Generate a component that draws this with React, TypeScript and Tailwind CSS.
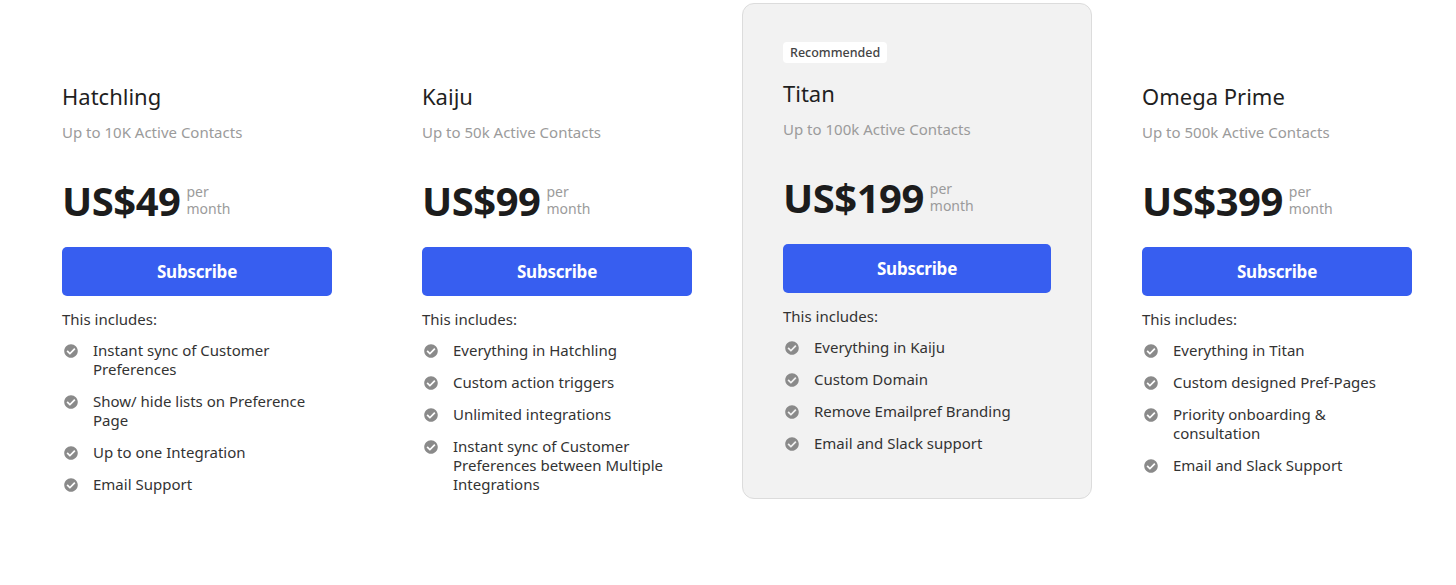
import { FaCheckCircle } from 'react-icons/fa'

type Plan = {
  name: string
  contacts: string
  price: string
  features: string[]
  recommended?: boolean
}

const plans: Plan[] = [
  {
    name: 'Hatchling',
    contacts: 'Up to 10K Active Contacts',
    price: 'US$49',
    features: [
      'Instant sync of Customer Preferences',
      'Show/ hide lists on Preference Page',
      'Up to one Integration',
      'Email Support',
    ],
  },
  {
    name: 'Kaiju',
    contacts: 'Up to 50k Active Contacts',
    price: 'US$99',
    features: [
      'Everything in Hatchling',
      'Custom action triggers',
      'Unlimited integrations',
      'Instant sync of Customer Preferences between Multiple Integrations',
    ],
  },
  {
    name: 'Titan',
    contacts: 'Up to 100k Active Contacts',
    price: 'US$199',
    recommended: true,
    features: ['Everything in Kaiju', 'Custom Domain', 'Remove Emailpref Branding', 'Email and Slack support'],
  },
  {
    name: 'Omega Prime',
    contacts: 'Up to 500k Active Contacts',
    price: 'US$399',
    features: [
      'Everything in Titan',
      'Custom designed Pref-Pages',
      'Priority onboarding & consultation',
      'Email and Slack Support',
    ],
  },
]

function PlanCard({ plan }: { plan: Plan }) {
  return (
    <div
      className={
        plan.recommended
          ? 'rounded-xl border border-[#dcdcdc] bg-[#f2f2f2] px-10 pt-[35px] pb-[45px]'
          : 'px-10 pt-[78px]'
      }
    >
      {/* badge only on the highlighted plan */}
      {plan.recommended && (
        <span className="mb-[15px] inline-block rounded-[4px] bg-white px-[7px] py-[2px] text-[12.5px] leading-[17px] font-medium text-[#444]">
          Recommended
        </span>
      )}
      <h2 className="text-[22px] leading-[30px] text-[#1f1f1f]">{plan.name}</h2>
      <p className="mt-[11px] text-[15px] leading-[20px] text-[#9b9b9b]">{plan.contacts}</p>

      <div className="mt-[35px] flex items-start gap-[6px]">
        <span className="text-[40px] leading-[48px] font-bold tracking-[-0.5px] text-[#1c1c1c]">{plan.price}</span>
        <span className="mt-[6px] text-[14px] leading-[17px] text-[#9b9b9b]">
          per
          <br />
          month
        </span>
      </div>

      <button className="mt-[22px] h-[49px] w-full rounded-[5px] bg-[#375ef0] text-[17px] font-bold tracking-[-0.2px] text-white">
        Subscribe
      </button>

      <p className="mt-[14px] text-[15px] leading-[19px] text-[#333]">This includes:</p>
      <ul className="mt-[12px] flex flex-col gap-[13px]">
        {plan.features.map((f) => (
          <li key={f} className="flex items-start gap-[15px] pl-[2px] text-[15px] leading-[19px] text-[#333]">
            <FaCheckCircle className="mt-[3px] h-[14px] w-[14px] shrink-0 text-[#8a8a8a]" />
            <span>{f}</span>
          </li>
        ))}
      </ul>
    </div>
  )
}

export default function App() {
  return (
    <div
      className="min-h-[585px] bg-white pt-[3px] pl-[22px]"
      style={{ fontFamily: '"Noto Sans", "Open Sans", sans-serif' }}
    >
      <div className="grid grid-cols-[350px_350px_350px_350px] items-start gap-[10px]">
        {plans.map((p) => (
          <PlanCard key={p.name} plan={p} />
        ))}
      </div>
    </div>
  )
}
